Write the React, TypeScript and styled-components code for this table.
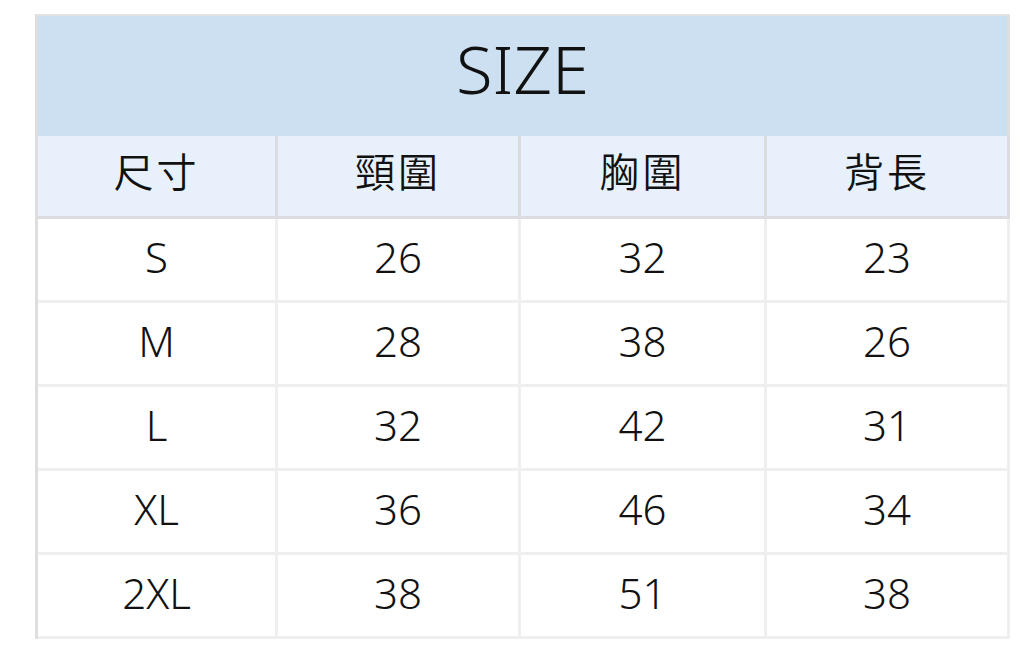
import styled, { createGlobalStyle } from 'styled-components'

const GlobalStyle = createGlobalStyle`
  html, body {
    margin: 0;
    padding: 0;
    background: #ffffff;
  }
  body {
    font-family: 'Noto Sans', 'Noto Sans CJK TC', sans-serif;
    color: #111111;
  }
`

const Page = styled.div`
  width: 1024px;
  height: 665px;
  padding: 14px 0 0 35px;
  box-sizing: border-box;
`

const Table = styled.div`
  width: 975px;
  border-left: 3px solid #dedede;
  border-top: 2px solid #e2e2e2;
  box-sizing: border-box;
`

const Title = styled.div`
  height: 120px;
  background: #cce0f1;
  display: flex;
  align-items: center;
  justify-content: center;
  font-size: 67px;
  font-weight: 350;
  border-right: 3px solid #dedede;
  padding-bottom: 16px;
  box-sizing: border-box;
`

const Row = styled.div<{ $head?: boolean }>`
  display: grid;
  grid-template-columns: 240px 243px 246px 1fr;
  height: ${p => (p.$head ? 83 : 84)}px;
  background: ${p => (p.$head ? '#e8f1fb' : '#ffffff')};
`

const Cell = styled.div<{ $head?: boolean }>`
  display: flex;
  align-items: center;
  justify-content: center;
  border-right: 3px solid ${p => (p.$head ? '#dadcdf' : '#efefef')};
  border-bottom: 3px solid ${p => (p.$head ? '#dadcdf' : '#efefef')};
  font-size: ${p => (p.$head ? 40 : 42)}px;
  font-weight: 350;
  font-family: ${p => (p.$head ? "'Noto Sans CJK TC', 'Noto Sans', sans-serif" : "'Noto Sans', sans-serif")};
  letter-spacing: ${p => (p.$head ? '3px' : '0')};
  box-sizing: border-box;
  padding-bottom: ${p => (p.$head ? 12 : 6)}px;
`

const headers = ['尺寸', '頸圍', '胸圍', '背長']
const rows = [
  ['S', '26', '32', '23'],
  ['M', '28', '38', '26'],
  ['L', '32', '42', '31'],
  ['XL', '36', '46', '34'],
  ['2XL', '38', '51', '38'],
]

export default function App() {
  return (
    <Page>
      <GlobalStyle />
      <Table>
        <Title>SIZE</Title>
        <Row $head>
          {headers.map(h => (
            <Cell $head key={h}>{h}</Cell>
          ))}
        </Row>
        {rows.map(r => (
          <Row key={r[0]}>
            {r.map((v, i) => (
              <Cell key={i}>{v}</Cell>
            ))}
          </Row>
        ))}
      </Table>
    </Page>
  )
}
